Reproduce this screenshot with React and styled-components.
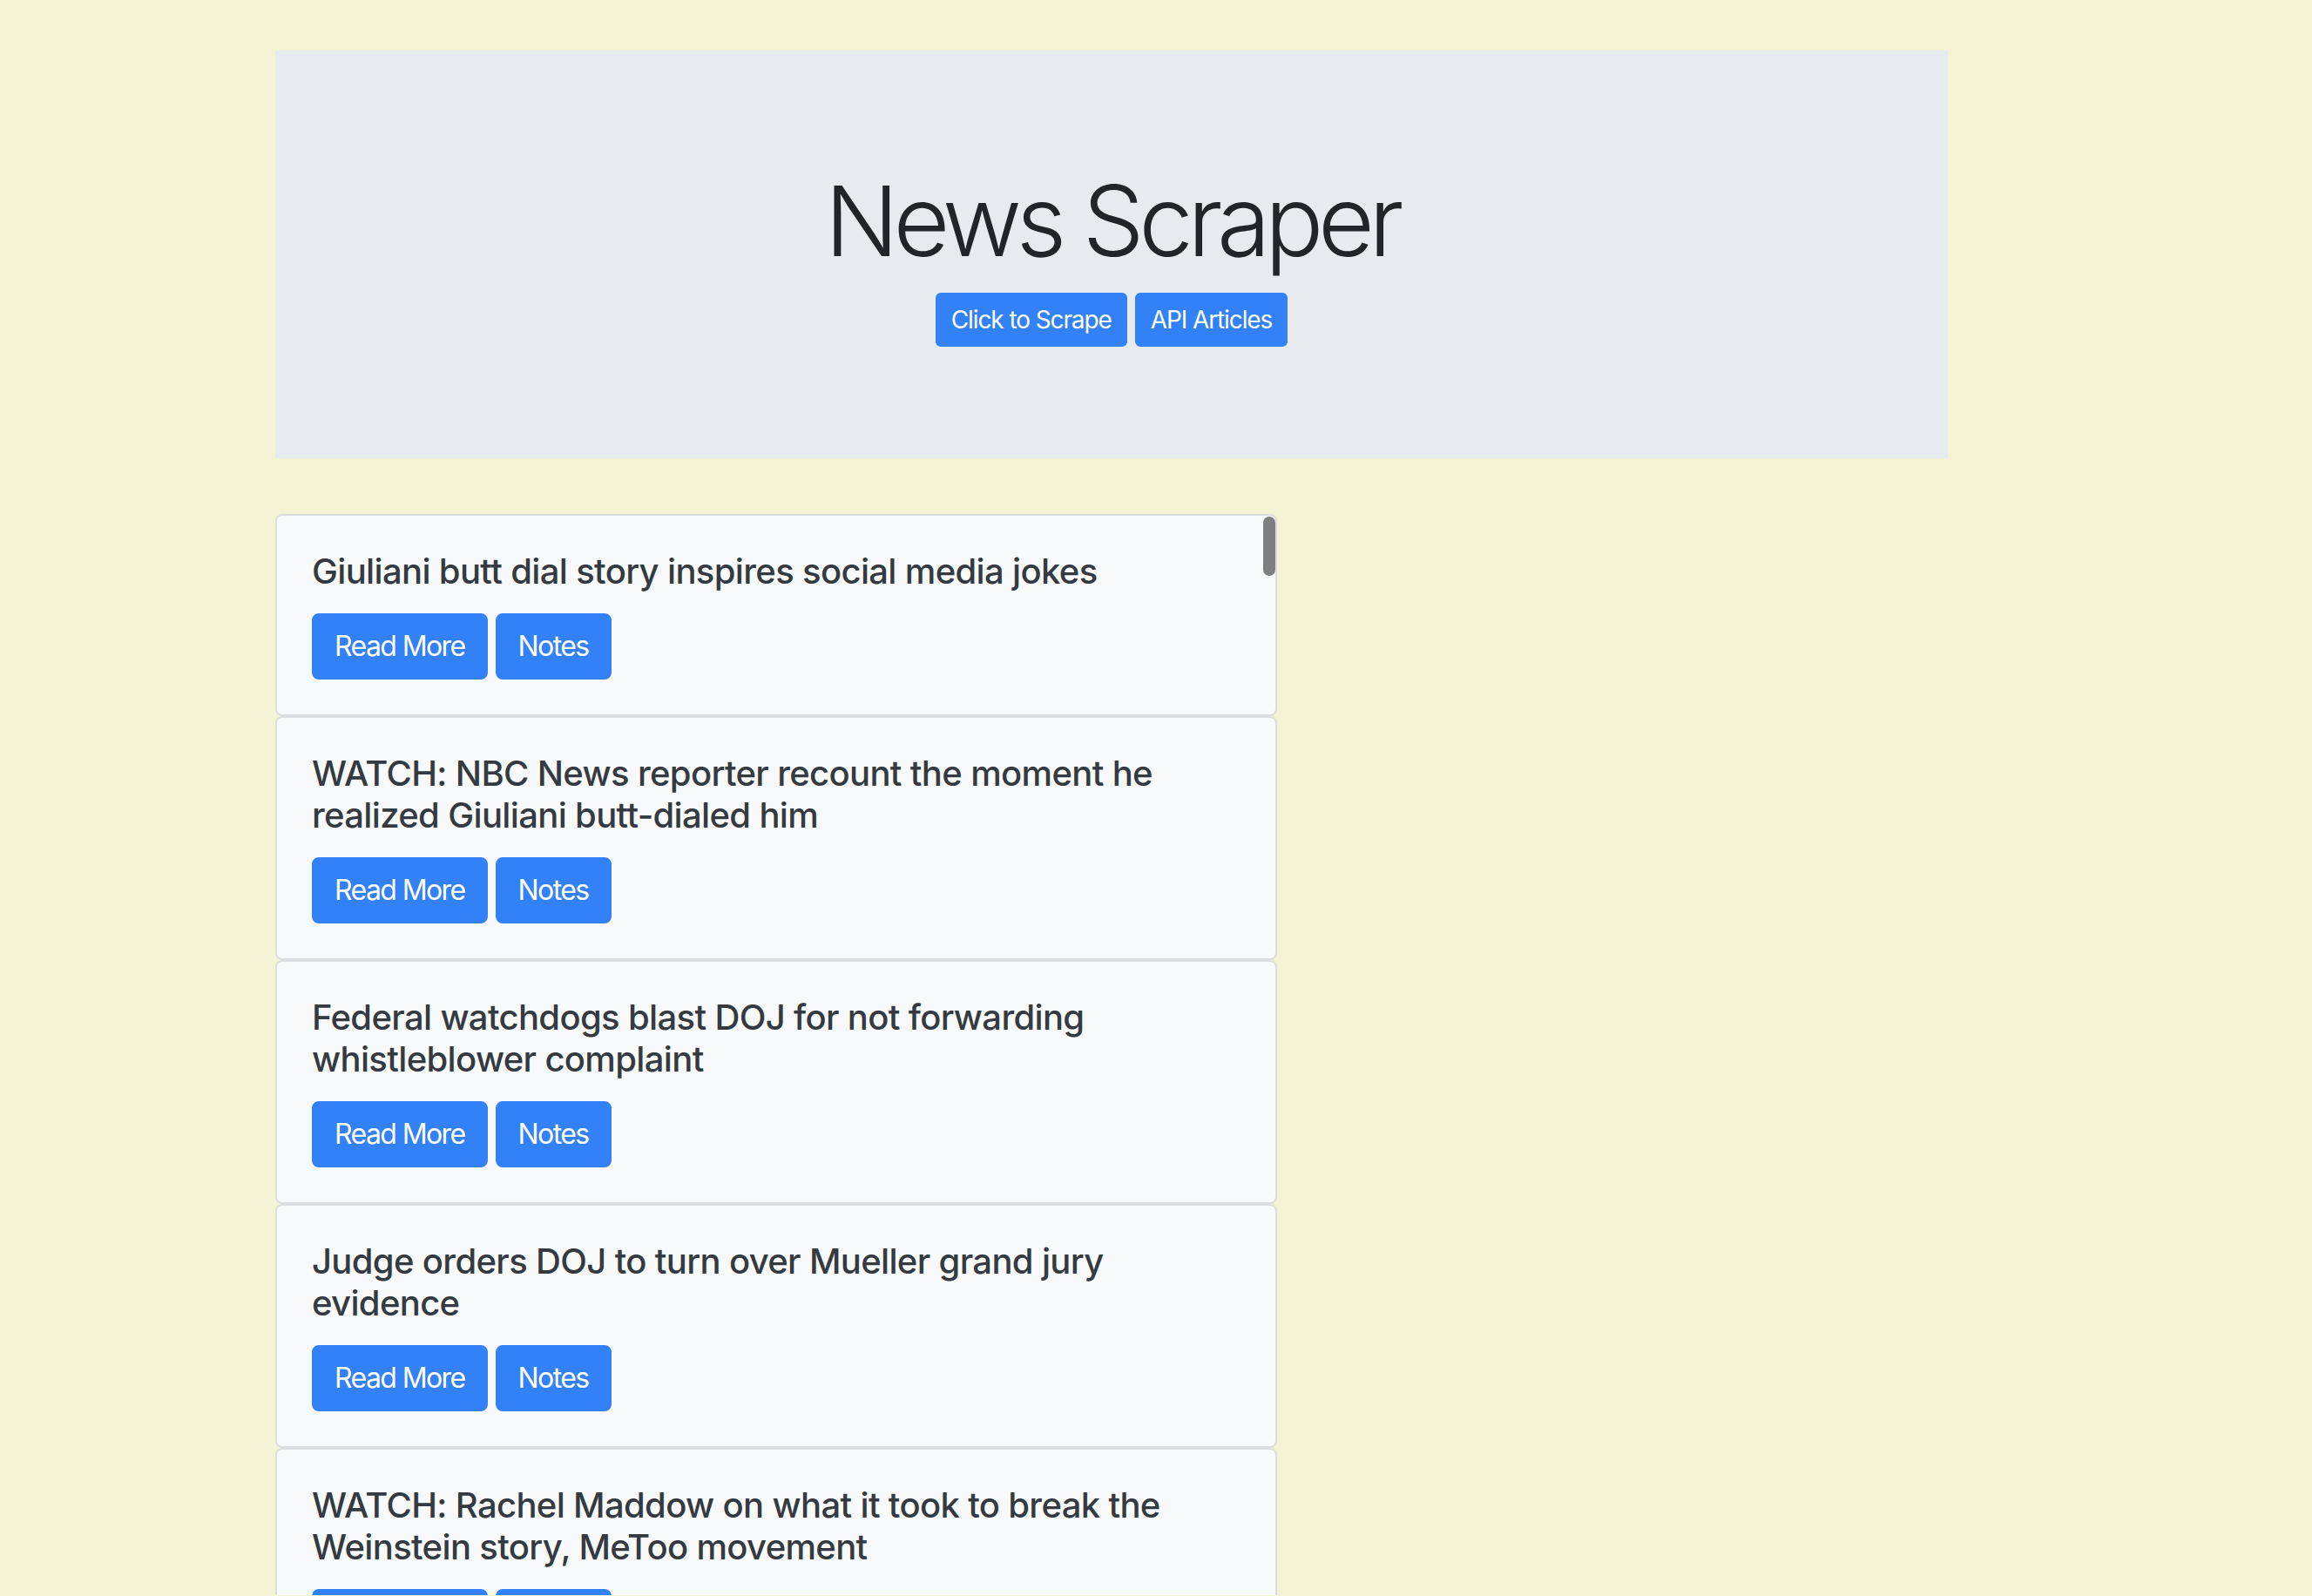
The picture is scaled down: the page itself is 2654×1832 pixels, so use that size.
import styled, { createGlobalStyle } from 'styled-components'

const GlobalStyle = createGlobalStyle`
  html, body {
    margin: 0;
    padding: 0;
    background: #f3f4d5;
    font-family: Inter, "Helvetica Neue", Arial, sans-serif;
    overflow: hidden;
  }
  * {
    box-sizing: border-box;
  }
`

const Page = styled.div`
  width: 1920px;
  margin-left: 316px;
  padding-top: 58px;
`

const Jumbotron = styled.header`
  background: #e8ebee;
  padding: 128px 64px;
  margin-bottom: 64px;
  text-align: center;
`

const Title = styled.h1`
  margin: 0 0 16px;
  font-size: 112px;
  font-weight: 300;
  line-height: 1.2;
  color: #212529;
  letter-spacing: -6.5px;
`

const Actions = styled.div`
  display: flex;
  justify-content: ${(p) => (p.$start ? 'flex-start' : 'center')};
  gap: 9px;
`

const Button = styled.button`
  display: inline-block;
  border: 2px solid #3381f6;
  background: #3381f6;
  color: #fff;
  font-family: inherit;
  font-weight: 400;
  font-size: ${(p) => (p.$small ? 28 : 32)}px;
  line-height: 1.5;
  padding: ${(p) => (p.$small ? '8px 16px' : '12px 24px')};
  border-radius: ${(p) => (p.$small ? 6 : 8)}px;
  cursor: pointer;
  letter-spacing: ${(p) => (p.$small ? -1.1 : -1.6)}px;
`

const ListWrap = styled.div`
  position: relative;
  width: 1150px;
`

const List = styled.div`
  height: 1241px;
  overflow: hidden;
`

const Thumb = styled.div`
  position: absolute;
  top: 3px;
  right: 2px;
  width: 14px;
  height: 68px;
  border-radius: 7px;
  background: #7f7f7f;
`

const Card = styled.article`
  background: #f8f9fa;
  border: 2px solid #dcdddf;
  border-radius: 8px;
  padding: 40px;
`

const CardTitle = styled.h5`
  margin: 0 0 24px;
  font-size: 40px;
  font-weight: 500;
  line-height: 1.2;
  color: #343a40;
  letter-spacing: -0.65px;
`

const articles = [
  'Giuliani butt dial story inspires social media jokes',
  'WATCH: NBC News reporter recount the moment he realized Giuliani butt-dialed him',
  'Federal watchdogs blast DOJ for not forwarding whistleblower complaint',
  'Judge orders DOJ to turn over Mueller grand jury evidence',
  'WATCH: Rachel Maddow on what it took to break the Weinstein story, MeToo movement',
  'Trump administration weighs new rules for asylum seekers',
]

export default function App() {
  return (
    <>
      <GlobalStyle />
      <Page>
        <Jumbotron>
          <Title>News Scraper</Title>
          <Actions>
            <Button $small>Click to Scrape</Button>
            <Button $small>API Articles</Button>
          </Actions>
        </Jumbotron>
        <ListWrap>
          <List>
            {articles.map((title) => (
              <Card key={title}>
                <CardTitle>{title}</CardTitle>
                <Actions $start>
                  <Button>Read More</Button>
                  <Button>Notes</Button>
                </Actions>
              </Card>
            ))}
          </List>
          <Thumb />
        </ListWrap>
      </Page>
    </>
  )
}
